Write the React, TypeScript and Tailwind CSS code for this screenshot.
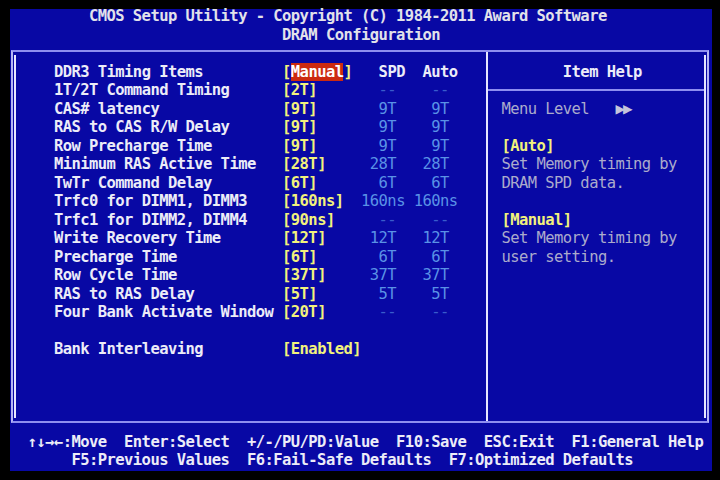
const items: [string, string, string, string][] = [
  ['1T/2T Command Timing', '2T', '--', '--'],
  ['CAS# latency', '9T', '9T', '9T'],
  ['RAS to CAS R/W Delay', '9T', '9T', '9T'],
  ['Row Precharge Time', '9T', '9T', '9T'],
  ['Minimum RAS Active Time', '28T', '28T', '28T'],
  ['TwTr Command Delay', '6T', '6T', '6T'],
  ['Trfc0 for DIMM1, DIMM3', '160ns', '160ns', '160ns'],
  ['Trfc1 for DIMM2, DIMM4', '90ns', '--', '--'],
  ['Write Recovery Time', '12T', '12T', '12T'],
  ['Precharge Time', '6T', '6T', '6T'],
  ['Row Cycle Time', '37T', '37T', '37T'],
  ['RAS to RAS Delay', '5T', '5T', '5T'],
  ['Four Bank Activate Window', '20T', '--', '--'],
];

// 5-char field, short values sit one char in from the right
const field = (v: string) => (v.length >= 5 ? v : v.padStart(4) + ' ');

function Dim({ v }: { v: string }) {
  const dash = v === '--';
  return <span className={`font-normal ${dash ? 'text-[#3a5ccc]' : 'text-[#5a92e6]'}`}>{field(v)}</span>;
}

function Row({ children, className = '' }: { children?: React.ReactNode; className?: string }) {
  return <div className={`h-[18.5px] leading-[14px] whitespace-pre ${className}`}>{children}</div>;
}

export default function App() {
  return (
    <div className="w-[720px] h-[480px] bg-black pt-[9px] pl-[10px]">
      <div
        className="w-[702px] h-[462px] bg-[#0808a4] text-[15.5px] tracking-[-0.557px] font-bold text-[#ececf8]"
        style={{ fontFamily: '"DejaVu Sans Mono", "Liberation Mono", monospace' }}
      >
        {/* Title */}
        <Row className="text-[#e2e2ea]">{'         CMOS Setup Utility - Copyright (C) 1984-2011 Award Software'}</Row>
        <Row className="text-[#e2e2ea]">{'                               DRAM Configuration'}</Row>

        {/* Main frame */}
        <div className="mt-[4px] ml-[1px] w-[698px] h-[373px] border-y-2 border-x-2 border-y-[#8e8ef0] border-x-[#b4b4f4]">
          <div className="mt-[3px] mx-[1px] h-[363px] border-x-2 border-[#e6e6ff] flex">
            {/* Items */}
            <div className="w-[470px] pt-[9.5px] pl-[37.9px]">
              <Row>
                {'DDR3 Timing Items'.padEnd(26)}
                <span className="text-[#f2f27c]">[</span>
                <span className="bg-[#cc2a10] text-white">Manual</span>
                <span className="text-[#f2f27c]">]</span>
                {'  '}
                {' SPD  Auto'}
              </Row>
              {items.map(([label, val, spd, auto]) => (
                <Row key={label}>
                  {label.padEnd(26)}
                  <span className="text-[#f2f27c]">{`[${val}]`.padEnd(9)}</span>
                  <Dim v={spd} />
                  {' '}
                  <Dim v={auto} />
                </Row>
              ))}
              <Row />
              <Row>
                {'Bank Interleaving'.padEnd(26)}
                <span className="text-[#f2f27c]">[Enabled]</span>
              </Row>
            </div>

            {/* Divider */}
            <div className="w-[2px] -mt-[3px] -mb-[3px] bg-[#e6e6ff]" />

            {/* Item help */}
            <div className="flex-1 pt-[9.5px]">
              <Row className="pl-[13.4px]">{'       Item Help'}</Row>
              <div className="h-[18.5px] pt-[6px]">
                <div className="border-t-2 border-[#8e8ef0]" />
              </div>
              <div className="pl-[13.4px] font-normal text-[#ababcc]">
                <Row>
                  {'Menu Level   '}
                  <span className="text-[16px] tracking-[-2px] text-[#c4c4dc]">▶▶</span>
                </Row>
                <Row />
                <Row className="font-bold text-[#f2f27c]">[Auto]</Row>
                <Row>Set Memory timing by</Row>
                <Row>DRAM SPD data.</Row>
                <Row />
                <Row className="font-bold text-[#f2f27c]">[Manual]</Row>
                <Row>Set Memory timing by</Row>
                <Row>user setting.</Row>
              </div>
            </div>
          </div>
        </div>

        {/* Key help */}
        <div className="mt-[11.5px]">
          <Row>{'  ↑↓→←:Move  Enter:Select  +/-/PU/PD:Value  F10:Save  ESC:Exit  F1:General Help'}</Row>
          <Row>{'       F5:Previous Values  F6:Fail-Safe Defaults  F7:Optimized Defaults'}</Row>
        </div>
      </div>
    </div>
  );
}
